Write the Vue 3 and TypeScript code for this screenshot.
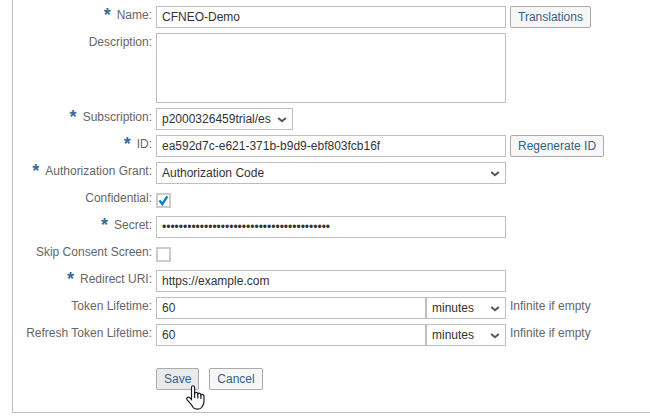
<script setup lang="ts">
import { ref } from 'vue'

type Kind = 'text' | 'area' | 'select' | 'check' | 'duration'

interface Field {
  label: string
  kind: Kind
  value?: string
  required?: boolean
  checked?: boolean
  narrow?: boolean
  action?: string
  hint?: string
}

const fields = ref<Field[]>([
  { label: 'Name', kind: 'text', value: 'CFNEO-Demo', required: true, action: 'Translations' },
  { label: 'Description', kind: 'area' },
  { label: 'Subscription', kind: 'select', value: 'p2000326459trial/es', required: true, narrow: true },
  { label: 'ID', kind: 'text', value: 'ea592d7c-e621-371b-b9d9-ebf803fcb16f', required: true, action: 'Regenerate ID' },
  { label: 'Authorization Grant', kind: 'select', value: 'Authorization Code', required: true },
  { label: 'Confidential', kind: 'check', checked: true },
  { label: 'Secret', kind: 'text', value: '•'.repeat(40), required: true },
  { label: 'Skip Consent Screen', kind: 'check', checked: false },
  { label: 'Redirect URI', kind: 'text', value: 'https://example.com', required: true },
  { label: 'Token Lifetime', kind: 'duration', value: '60', hint: 'Infinite if empty' },
  { label: 'Refresh Token Lifetime', kind: 'duration', value: '60', hint: 'Infinite if empty' },
])
</script>

<template>
  <main class="page">
    <form class="panel" @submit.prevent>
      <div v-for="f in fields" :key="f.label" class="row" :class="{ tall: f.kind === 'area' }">
        <label class="label"><span v-if="f.required" class="star">*</span>{{ f.label }}:</label>
        <div v-if="f.kind === 'text'" class="box">{{ f.value }}</div>
        <div v-else-if="f.kind === 'area'" class="box area"></div>
        <div v-else-if="f.kind === 'select'" class="box select" :class="{ narrow: f.narrow }">
          <span>{{ f.value }}</span>
          <svg class="chevron" viewBox="0 0 10 6"><path d="M1.2 1.1 5 4.3 8.8 1.1" /></svg>
        </div>
        <div v-else-if="f.kind === 'check'" class="check" @click="f.checked = !f.checked">
          <svg v-if="f.checked" viewBox="0 0 11 11"><path d="M1.5 5.4 4.3 9.2 9.4 1.4" /></svg>
        </div>
        <div v-else class="duration">
          <div class="box amount">{{ f.value }}</div>
          <div class="box select unit">
            <span>minutes</span>
            <svg class="chevron" viewBox="0 0 10 6"><path d="M1.2 1.1 5 4.3 8.8 1.1" /></svg>
          </div>
        </div>
        <button v-if="f.action" type="button" class="btn">{{ f.action }}</button>
        <span v-if="f.hint" class="hint">{{ f.hint }}</span>
      </div>
      <div class="actions">
        <div class="save">
          <button type="button" class="btn hovered">Save</button>
          <svg class="pointer" viewBox="0 0 19 25">
            <path d="M5.5 14.5V2.4C5.5 .2 8.6 .2 8.6 2.4V8.5C9.2 6.8 11.8 7.1 11.8 9C12.6 7.6 14.9 8.2 14.9 10C16 8.9 18 9.6 18 11.3V16.5C18 19 16.4 20.8 15.8 22.3C14.2 24.8 9 24.8 7 22.3C5.6 19.5 3.2 17.4 1.2 14.9C-.1 13 2 11.2 3.7 12.7L5.5 14.5Z" />
            <path d="M8.6 8V13M11.8 9V13.5M14.9 10.3V14" />
          </svg>
        </div>
        <button type="button" class="btn">Cancel</button>
      </div>
    </form>
  </main>
</template>

<style>
body {
  margin: 0;
  background: #fff;
  overflow: hidden;
}
</style>

<style scoped>
.page {
  box-sizing: border-box;
  width: 650px;
  height: 419px;
  padding-left: 12px;
  overflow: hidden;
  font: 12px/20px "Liberation Sans", Arial, sans-serif;
  color: #333;
}
.panel {
  box-sizing: border-box;
  height: 413px;
  padding-top: 6px;
  border: solid #bfbfbf;
  border-width: 0 0 1px 1px;
}
.row {
  display: flex;
  height: 22px;
  margin-bottom: 5px;
}
.tall {
  height: 70px;
}
.label {
  width: 139px;
  height: 18px;
  margin-right: 4px;
  line-height: 18px;
  text-align: right;
  color: #666;
  white-space: nowrap;
}
.star {
  display: inline-block;
  height: 18px;
  margin-right: 6px;
  font-size: 18px;
  line-height: 18px;
  font-weight: bold;
  color: #3a6c98;
  vertical-align: top;
}
.box {
  box-sizing: border-box;
  width: 350px;
  height: 22px;
  padding: 0 5px;
  border: 1px solid #bfbfbf;
  background: #fff;
  white-space: nowrap;
}
.area {
  height: 70px;
}
.select {
  display: flex;
  align-items: center;
  justify-content: space-between;
}
.narrow {
  width: 137px;
}
.duration {
  display: flex;
  width: 350px;
}
.amount {
  width: 270px;
}
.unit {
  width: 80px;
}
.chevron {
  width: 10px;
  height: 6px;
  margin-top: 1px;
  fill: none;
  stroke: #555;
  stroke-width: 2;
}
.check {
  box-sizing: border-box;
  width: 15px;
  height: 15px;
  margin-top: 4px;
  border: 2px solid #ccc;
}
.check svg {
  display: block;
  width: 11px;
  height: 11px;
  fill: none;
  stroke: #007cc0;
  stroke-width: 2.3;
}
.btn {
  box-sizing: border-box;
  height: 22px;
  margin: 0 0 0 4px;
  padding: 0 7px;
  border: 1px solid #ababab;
  border-radius: 2px;
  background: #f7f7f7;
  font: inherit;
  color: #346187;
  white-space: nowrap;
}
.hint {
  margin-left: 4px;
  height: 18px;
  line-height: 18px;
  color: #666;
}
.actions {
  display: flex;
  gap: 6px;
  padding: 17px 0 0 139px;
}
.save {
  position: relative;
}
.hovered {
  background: #eaeaea;
}
.pointer {
  position: absolute;
  left: 34px;
  top: 17px;
  width: 19px;
  height: 25px;
  fill: #fff;
  stroke: #1c1c2c;
  stroke-width: 1.2;
}
</style>
